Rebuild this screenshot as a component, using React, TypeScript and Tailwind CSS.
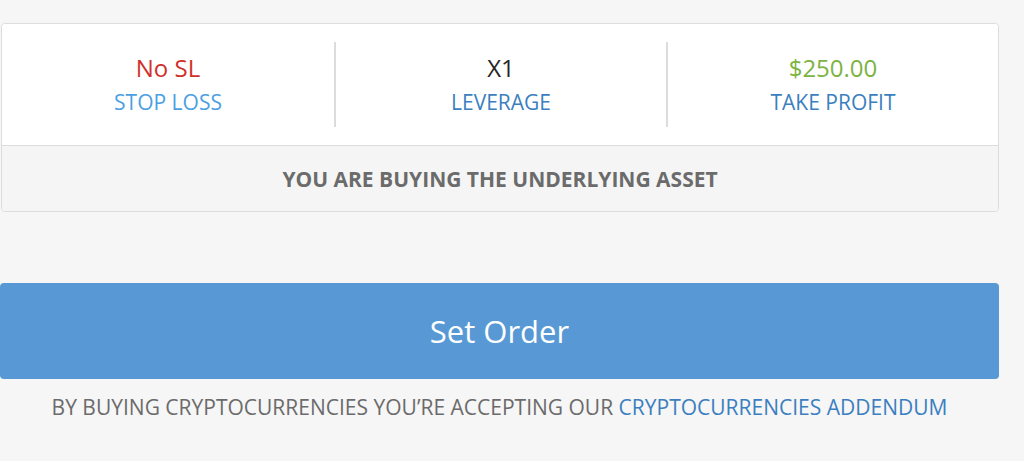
import React from 'react';

const font = { fontFamily: '"Open Sans", "Liberation Sans", sans-serif' };

const Stat = ({ value, valueClass, label, labelClass, divider }: { value: string; valueClass: string; label: string; labelClass: string; divider?: boolean }) => (
    <div className="flex-1 flex items-center">
        {divider && <div className="w-[2px] h-[85px] bg-[#dcdcdc]" />}
        <div className="flex-1 flex flex-col items-center">
            <span className={`text-[24px] leading-[30px] ${valueClass}`}>{value}</span>
            <span className={`text-[21px] leading-[28px] mt-[5px] ${labelClass}`}>{label}</span>
        </div>
    </div>
);

const App: React.FC = () => {
    return (
        <div className="w-[1024px] h-[461px] bg-[#f6f6f6] overflow-hidden" style={font}>
            <div className="w-[999px] pt-[23px]">
                <div className="ml-[1px] rounded-[4px] border border-[#dddddd] overflow-hidden">
                    <div className="h-[122px] bg-white flex items-center border-b border-[#dddddd]">
                        <Stat value="No SL" valueClass="text-[#d0302b]" label="STOP LOSS" labelClass="text-[#4c9fe2]" />
                        <Stat value="X1" valueClass="text-[#262626]" label="LEVERAGE" labelClass="text-[#3b7fc0]" divider />
                        <Stat value="$250.00" valueClass="text-[#7cb342]" label="TAKE PROFIT" labelClass="text-[#3b7fc0]" divider />
                    </div>
                    <div className="h-[65px] bg-[#f5f5f5] flex items-center justify-center pt-[2px]">
                        <span className="text-[21px] font-bold text-[#6b6b6b]">YOU ARE BUYING THE UNDERLYING ASSET</span>
                    </div>
                </div>
                <button className="mt-[71px] w-full h-[96px] rounded-[4px] bg-[#5899d5] text-white text-[31px]">
                    Set Order
                </button>
                <p className="mt-[14px] text-center text-[21px] leading-[28px] text-[#6b6b6b]">
                    BY BUYING CRYPTOCURRENCIES YOU’RE ACCEPTING OUR <span className="text-[#3b7fc0]">CRYPTOCURRENCIES ADDENDUM</span>
                </p>
            </div>
        </div>
    );
};

export default App;
